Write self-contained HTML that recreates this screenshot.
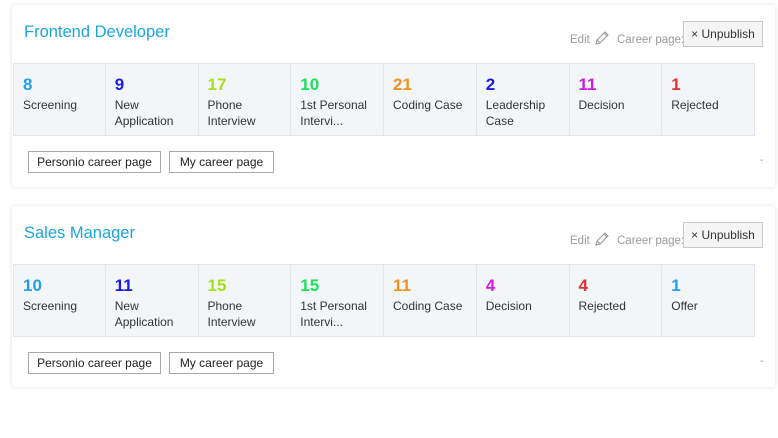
<!DOCTYPE html>
<html><head><style>
*{box-sizing:border-box;margin:0;padding:0}
body{width:778px;height:438px;background:#fff;font-family:"Liberation Sans",sans-serif;position:relative;overflow:hidden}
.card{position:absolute;left:12px;width:763px;background:#fff;border-radius:3px;box-shadow:0 0 4px rgba(0,0,0,.12)}
.title{position:absolute;left:12px;top:18px;font-size:16.5px;color:#1ba6dc}
.edit{position:absolute;left:558px;top:25px;font-size:11.5px;color:#9a9a9a;white-space:nowrap}
.cp{position:absolute;left:605px;top:28px;font-size:11.5px;color:#9a9a9a;white-space:nowrap;line-height:14px}
.unp{position:absolute;left:671px;top:16px;width:80px;height:26px;border:1px solid #c8c8c8;background:#f5f5f5;font-size:12px;color:#333;line-height:24px;text-align:center;white-space:nowrap}
.row{position:absolute;left:1px;top:58px;width:742px;height:73px;display:flex;border-top:1px solid #e2e6ea;border-bottom:1px solid #e2e6ea;background:#f3f6f9}
.c{width:92.75px;border-right:1px solid #e2e6ea;padding:11px 0 0 9px}
.c:first-child{border-left:1px solid #e2e6ea}
.n{font-size:17px;font-weight:bold;line-height:20px}
.l{font-size:12px;color:#333;line-height:16px;margin-top:2px}
.btn{position:absolute;top:146px;height:22px;border:1px solid #a8a8a8;font-size:12px;color:#222;line-height:20px;text-align:center;background:#fff}
.dash{position:absolute;left:748px;top:150px;font-size:10px;color:#888}
</style></head><body>

<div class="card" style="top:5px;height:182px">
<div class="title">Frontend Developer</div>
<div class="edit">Edit <svg width="17" height="17" viewBox="0 0 17 17" style="vertical-align:-4px"><path d="M3 14l1-4 8-8 3 3-8 8z M4 10l3 3 M11 3l3 3" fill="none" stroke="#999" stroke-width="1.1"/></svg></div>
<div class="cp">Career page:</div>
<div class="unp">× Unpublish</div>
<div class="row">
<div class="c"><div class="n" style="color:#20a0e8">8</div><div class="l">Screening</div></div>
<div class="c"><div class="n" style="color:#1a1ae0">9</div><div class="l">New<br>Application</div></div>
<div class="c"><div class="n" style="color:#a6e01a">17</div><div class="l">Phone<br>Interview</div></div>
<div class="c"><div class="n" style="color:#1ae05a">10</div><div class="l">1st Personal<br>Intervi...</div></div>
<div class="c"><div class="n" style="color:#f0921a">21</div><div class="l">Coding Case</div></div>
<div class="c"><div class="n" style="color:#1a1ae0">2</div><div class="l">Leadership<br>Case</div></div>
<div class="c"><div class="n" style="color:#d01ae0">11</div><div class="l">Decision</div></div>
<div class="c"><div class="n" style="color:#e03030">1</div><div class="l">Rejected</div></div>
</div>
<div class="btn" style="left:16px;width:133px">Personio career page</div>
<div class="btn" style="left:157px;width:105px">My career page</div>
<div class="dash">-</div>
</div>

<div class="card" style="top:206px;height:181px">
<div class="title">Sales Manager</div>
<div class="edit">Edit <svg width="17" height="17" viewBox="0 0 17 17" style="vertical-align:-4px"><path d="M3 14l1-4 8-8 3 3-8 8z M4 10l3 3 M11 3l3 3" fill="none" stroke="#999" stroke-width="1.1"/></svg></div>
<div class="cp">Career page:</div>
<div class="unp">× Unpublish</div>
<div class="row">
<div class="c"><div class="n" style="color:#20a0e8">10</div><div class="l">Screening</div></div>
<div class="c"><div class="n" style="color:#1a1ae0">11</div><div class="l">New<br>Application</div></div>
<div class="c"><div class="n" style="color:#a6e01a">15</div><div class="l">Phone<br>Interview</div></div>
<div class="c"><div class="n" style="color:#1ae05a">15</div><div class="l">1st Personal<br>Intervi...</div></div>
<div class="c"><div class="n" style="color:#f0921a">11</div><div class="l">Coding Case</div></div>
<div class="c"><div class="n" style="color:#d01ae0">4</div><div class="l">Decision</div></div>
<div class="c"><div class="n" style="color:#e03030">4</div><div class="l">Rejected</div></div>
<div class="c"><div class="n" style="color:#20a0e8">1</div><div class="l">Offer</div></div>
</div>
<div class="btn" style="left:16px;width:133px">Personio career page</div>
<div class="btn" style="left:157px;width:105px">My career page</div>
<div class="dash">-</div>
</div>

</body></html>
